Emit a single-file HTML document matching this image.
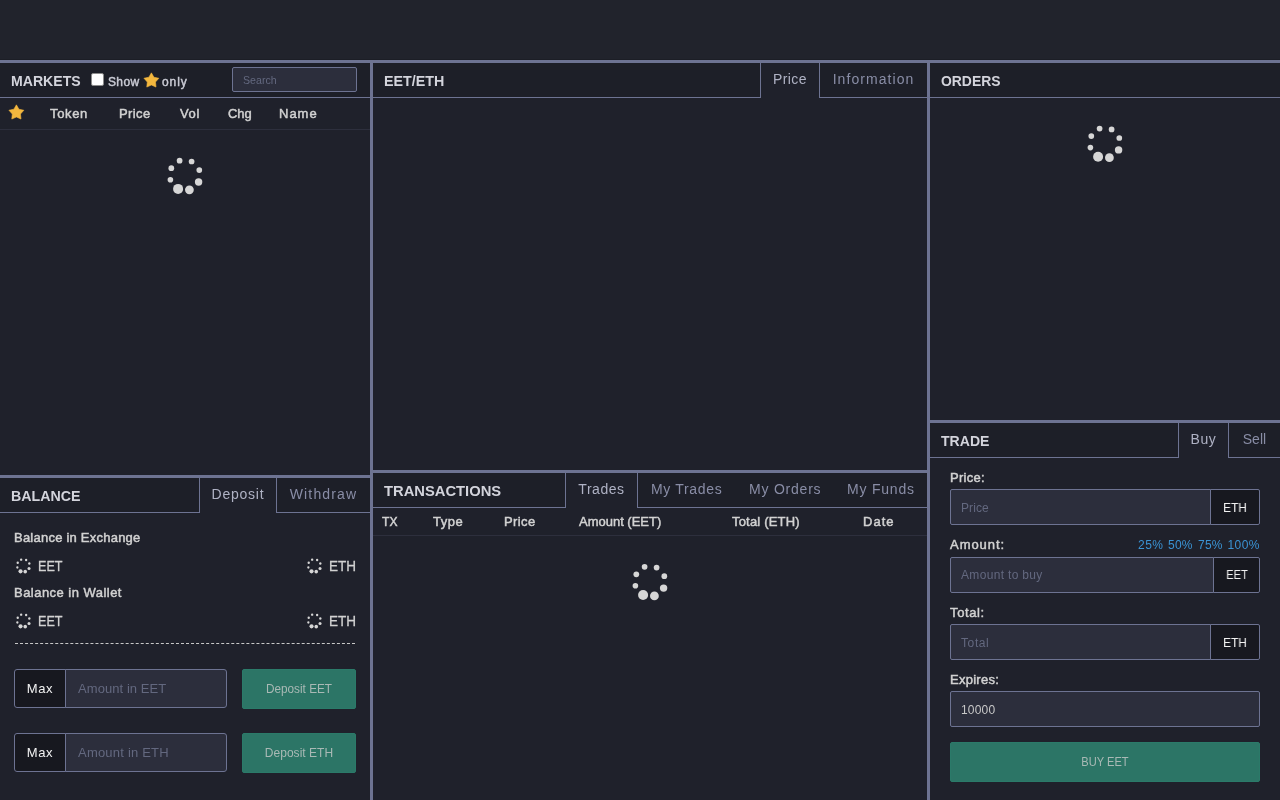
<!DOCTYPE html>
<html lang="en">
<head>
<meta charset="utf-8">
<title>EET/ETH</title>
<style>
*{box-sizing:border-box;margin:0;padding:0}
html,body{width:1280px;height:800px;overflow:hidden;background:#1f212b}
body{position:relative;font-family:"Liberation Sans","DejaVu Sans",sans-serif;font-size:13px;color:#d2d2d2}
.a,.t{position:absolute}
.t{white-space:nowrap;line-height:1;display:block;font-weight:normal;font-size:13px}
.tx{position:absolute;left:0;top:0;width:1280px;height:800px;will-change:transform}
.nav{left:0;top:0;width:1280px;height:60px;background:#21232c;border-bottom:1px solid #1c1e26}
.hd{background:#1d1f28;height:34px}
</style>
</head>
<body>
<div class="a nav"></div>
<!-- frame -->
<div class="a" style="left:0px;top:60px;width:1280px;height:3px;background:#6d7392"></div>
<div class="a" style="left:370px;top:60px;width:3px;height:740px;background:#6d7392"></div>
<div class="a" style="left:927px;top:60px;width:3px;height:740px;background:#6d7392"></div>
<div class="a" style="left:0px;top:475px;width:370px;height:3px;background:#6d7392"></div>
<div class="a" style="left:373px;top:470px;width:554px;height:3px;background:#6d7392"></div>
<div class="a" style="left:930px;top:420px;width:350px;height:3px;background:#6d7392"></div>
<!-- markets -->
<div class="a hd" style="left:0;top:63px;width:370px"></div>
<div class="a" style="left:0px;top:97px;width:370px;height:1px;background:#6d7392"></div>
<div class="a" style="left:91px;top:73px;width:13px;height:13px;background:#fff;border:1px solid #8a8a8a;border-radius:2px"></div>
<svg class="a" style="left:141px;top:70px" width="20" height="20" viewBox="0 0 20 20"><polygon points="10.40,2.85 12.93,7.22 17.87,8.27 14.49,12.03 15.01,17.05 10.40,15.00 5.79,17.05 6.31,12.03 2.93,8.27 7.87,7.22" fill="#f3b73e" stroke="#f3b73e" stroke-width="0.6" stroke-linejoin="round"/></svg>
<div class="a" style="left:232px;top:67px;width:125px;height:25px;background:#2c2e3c;border:1px solid #6d7392;border-radius:2px"></div>
<svg class="a" style="left:6px;top:102px" width="20" height="20" viewBox="0 0 20 20"><polygon points="10.40,2.85 12.93,7.22 17.87,8.27 14.49,12.03 15.01,17.05 10.40,15.00 5.79,17.05 6.31,12.03 2.93,8.27 7.87,7.22" fill="#f3b73e" stroke="#f3b73e" stroke-width="0.6" stroke-linejoin="round"/></svg>
<div class="a" style="left:0px;top:129px;width:370px;height:1px;background:#2d2f3d"></div>
<svg class="a" style="left:163px;top:153px" width="44" height="44" viewBox="0 0 44 44" fill="#d6d6d6"><circle cx="16.60" cy="7.70" r="2.85"/><circle cx="28.60" cy="8.50" r="2.85"/><circle cx="36.30" cy="17.10" r="2.85"/><circle cx="35.60" cy="29.00" r="3.70"/><circle cx="26.40" cy="36.80" r="4.40"/><circle cx="15.10" cy="35.90" r="5.00"/><circle cx="7.40" cy="26.70" r="2.80"/><circle cx="8.30" cy="15.20" r="2.85"/></svg>
<!-- balance -->
<div class="a hd" style="left:0;top:478px;width:370px"></div>
<div class="a" style="left:0px;top:512px;width:199px;height:1px;background:#6d7392"></div>
<div class="a" style="left:199px;top:478px;width:77px;height:35px;background:#1f212b;border-left:1px solid #6d7392"></div>
<div class="a" style="left:276px;top:478px;width:94px;height:35px;border-left:1px solid #6d7392;border-bottom:1px solid #6d7392"></div>
<svg class="a" style="left:13px;top:555px" width="20" height="20" viewBox="0 0 20 20" fill="#d6d6d6"><circle cx="8.16" cy="4.64" r="1.18"/><circle cx="13.13" cy="4.97" r="1.18"/><circle cx="16.32" cy="8.53" r="1.18"/><circle cx="16.03" cy="13.46" r="1.53"/><circle cx="12.22" cy="16.69" r="1.82"/><circle cx="7.54" cy="16.31" r="2.07"/><circle cx="4.36" cy="12.50" r="1.16"/><circle cx="4.73" cy="7.74" r="1.18"/></svg>
<svg class="a" style="left:304px;top:555px" width="20" height="20" viewBox="0 0 20 20" fill="#d6d6d6"><circle cx="8.16" cy="4.64" r="1.18"/><circle cx="13.13" cy="4.97" r="1.18"/><circle cx="16.32" cy="8.53" r="1.18"/><circle cx="16.03" cy="13.46" r="1.53"/><circle cx="12.22" cy="16.69" r="1.82"/><circle cx="7.54" cy="16.31" r="2.07"/><circle cx="4.36" cy="12.50" r="1.16"/><circle cx="4.73" cy="7.74" r="1.18"/></svg>
<svg class="a" style="left:13px;top:610px" width="20" height="20" viewBox="0 0 20 20" fill="#d6d6d6"><circle cx="8.16" cy="4.64" r="1.18"/><circle cx="13.13" cy="4.97" r="1.18"/><circle cx="16.32" cy="8.53" r="1.18"/><circle cx="16.03" cy="13.46" r="1.53"/><circle cx="12.22" cy="16.69" r="1.82"/><circle cx="7.54" cy="16.31" r="2.07"/><circle cx="4.36" cy="12.50" r="1.16"/><circle cx="4.73" cy="7.74" r="1.18"/></svg>
<svg class="a" style="left:304px;top:610px" width="20" height="20" viewBox="0 0 20 20" fill="#d6d6d6"><circle cx="8.16" cy="4.64" r="1.18"/><circle cx="13.13" cy="4.97" r="1.18"/><circle cx="16.32" cy="8.53" r="1.18"/><circle cx="16.03" cy="13.46" r="1.53"/><circle cx="12.22" cy="16.69" r="1.82"/><circle cx="7.54" cy="16.31" r="2.07"/><circle cx="4.36" cy="12.50" r="1.16"/><circle cx="4.73" cy="7.74" r="1.18"/></svg>
<div class="a" style="left:15px;top:643px;width:340px;height:0px;border-top:1px dashed #c8c8c8"></div>
<div class="a" style="left:14px;top:669px;width:52px;height:39px;background:#17181f;border:1px solid #6d7392;border-radius:3px 0 0 3px"></div>
<div class="a" style="left:65px;top:669px;width:162px;height:39px;background:#2c2e3c;border:1px solid #6d7392;border-radius:0 3px 3px 0"></div>
<div class="a" style="left:242px;top:669px;width:114px;height:40px;background:#2c7566;border:1px solid #2b7a69;border-radius:2px"></div>
<div class="a" style="left:14px;top:733px;width:52px;height:39px;background:#17181f;border:1px solid #6d7392;border-radius:3px 0 0 3px"></div>
<div class="a" style="left:65px;top:733px;width:162px;height:39px;background:#2c2e3c;border:1px solid #6d7392;border-radius:0 3px 3px 0"></div>
<div class="a" style="left:242px;top:733px;width:114px;height:40px;background:#2c7566;border:1px solid #2b7a69;border-radius:2px"></div>
<!-- chart -->
<div class="a hd" style="left:373px;top:63px;width:554px"></div>
<div class="a" style="left:373px;top:97px;width:387px;height:1px;background:#6d7392"></div>
<div class="a" style="left:760px;top:63px;width:59px;height:35px;background:#1f212b;border-left:1px solid #6d7392"></div>
<div class="a" style="left:819px;top:63px;width:108px;height:35px;border-left:1px solid #6d7392;border-bottom:1px solid #6d7392"></div>
<!-- transactions -->
<div class="a hd" style="left:373px;top:473px;width:554px"></div>
<div class="a" style="left:373px;top:507px;width:192px;height:1px;background:#6d7392"></div>
<div class="a" style="left:565px;top:473px;width:72px;height:35px;background:#1f212b;border-left:1px solid #6d7392"></div>
<div class="a" style="left:637px;top:473px;width:290px;height:35px;border-left:1px solid #6d7392;border-bottom:1px solid #6d7392"></div>
<div class="a" style="left:373px;top:535px;width:554px;height:1px;background:#2d2f3d"></div>
<svg class="a" style="left:628px;top:559px" width="44" height="44" viewBox="0 0 44 44" fill="#d6d6d6"><circle cx="16.60" cy="7.80" r="2.85"/><circle cx="28.60" cy="8.60" r="2.85"/><circle cx="36.30" cy="17.20" r="2.85"/><circle cx="35.60" cy="29.10" r="3.70"/><circle cx="26.40" cy="36.90" r="4.40"/><circle cx="15.10" cy="36.00" r="5.00"/><circle cx="7.40" cy="26.80" r="2.80"/><circle cx="8.30" cy="15.30" r="2.85"/></svg>
<!-- orders -->
<div class="a hd" style="left:930px;top:63px;width:350px"></div>
<div class="a" style="left:930px;top:97px;width:350px;height:1px;background:#6d7392"></div>
<svg class="a" style="left:1083px;top:121px" width="44" height="44" viewBox="0 0 44 44" fill="#d6d6d6"><circle cx="16.60" cy="7.60" r="2.85"/><circle cx="28.60" cy="8.40" r="2.85"/><circle cx="36.30" cy="17.00" r="2.85"/><circle cx="35.60" cy="28.90" r="3.70"/><circle cx="26.40" cy="36.70" r="4.40"/><circle cx="15.10" cy="35.80" r="5.00"/><circle cx="7.40" cy="26.60" r="2.80"/><circle cx="8.30" cy="15.10" r="2.85"/></svg>
<!-- trade -->
<div class="a hd" style="left:930px;top:423px;width:350px"></div>
<div class="a" style="left:930px;top:457px;width:248px;height:1px;background:#6d7392"></div>
<div class="a" style="left:1178px;top:423px;width:50px;height:35px;background:#1f212b;border-left:1px solid #6d7392"></div>
<div class="a" style="left:1228px;top:423px;width:52px;height:35px;border-left:1px solid #6d7392;border-bottom:1px solid #6d7392"></div>
<div class="a" style="left:950px;top:489px;width:261px;height:36px;background:#2c2e3c;border:1px solid #6d7392;border-radius:2px 0 0 2px"></div>
<div class="a" style="left:1210px;top:489px;width:50px;height:36px;background:#17181f;border:1px solid #6d7392;border-radius:0 2px 2px 0"></div>
<div class="a" style="left:950px;top:557px;width:264px;height:36px;background:#2c2e3c;border:1px solid #6d7392;border-radius:2px 0 0 2px"></div>
<div class="a" style="left:1213px;top:557px;width:47px;height:36px;background:#17181f;border:1px solid #6d7392;border-radius:0 2px 2px 0"></div>
<div class="a" style="left:950px;top:624px;width:261px;height:36px;background:#2c2e3c;border:1px solid #6d7392;border-radius:2px 0 0 2px"></div>
<div class="a" style="left:1210px;top:624px;width:50px;height:36px;background:#17181f;border:1px solid #6d7392;border-radius:0 2px 2px 0"></div>
<div class="a" style="left:950px;top:691px;width:310px;height:36px;background:#2c2e3c;border:1px solid #6d7392;border-radius:2px"></div>
<div class="a" style="left:950px;top:742px;width:310px;height:40px;background:#2c7566;border:1px solid #2b7a69;border-radius:2px"></div>
<!-- text -->
<div class="tx">
<h2 class="t" style="top:73px;left:11px;font-size:15.5px;font-weight:bold;transform:scaleX(0.9097);transform-origin:0 50%;color:#d3d4dc">MARKETS</h2>
<div class="t" style="top:76px;left:108px;font-size:12px;-webkit-text-stroke:0.43px;letter-spacing:0.36px;color:#cbccd6">Show</div>
<div class="t" style="top:76px;left:162px;font-size:12px;-webkit-text-stroke:0.43px;letter-spacing:0.91px;color:#cbccd6">only</div>
<div class="t" style="top:75px;left:243px;font-size:11px;transform:scaleX(0.9652);transform-origin:0 50%;color:#63687f">Search</div>
<div class="t" style="top:107px;left:50px;-webkit-text-stroke:0.47px;letter-spacing:0.65px">Token</div>
<div class="t" style="top:107px;left:119px;-webkit-text-stroke:0.47px;letter-spacing:0.38px">Price</div>
<div class="t" style="top:107px;left:180px;-webkit-text-stroke:0.47px;letter-spacing:0.66px">Vol</div>
<div class="t" style="top:107px;left:228px;-webkit-text-stroke:0.47px;transform:scaleX(0.9948);transform-origin:0 50%">Chg</div>
<div class="t" style="top:107px;left:279px;-webkit-text-stroke:0.47px;letter-spacing:0.99px">Name</div>
<h2 class="t" style="top:488px;left:11px;font-size:15.5px;font-weight:bold;transform:scaleX(0.9159);transform-origin:0 50%;color:#d3d4dc">BALANCE</h2>
<a class="t" style="top:487px;left:38px;width:400px;text-align:center;font-size:14px;letter-spacing:0.76px;color:#afb2c4">Deposit</a>
<a class="t" style="top:487px;left:123.5px;width:400px;text-align:center;font-size:14px;letter-spacing:1.15px;color:#898da6">Withdraw</a>
<div class="t" style="top:531px;left:14px;-webkit-text-stroke:0.47px;letter-spacing:0.23px">Balance in Exchange</div>
<div class="t" style="top:558px;left:38px;font-size:15.5px;-webkit-text-stroke:0.30px;transform:scaleX(0.8155);transform-origin:0 50%">EET</div>
<div class="t" style="top:558px;right:924px;font-size:15.5px;-webkit-text-stroke:0.30px;transform:scaleX(0.8710);transform-origin:100% 50%">ETH</div>
<div class="t" style="top:586px;left:14px;-webkit-text-stroke:0.47px;letter-spacing:0.47px">Balance in Wallet</div>
<div class="t" style="top:613px;left:38px;font-size:15.5px;-webkit-text-stroke:0.30px;transform:scaleX(0.8155);transform-origin:0 50%">EET</div>
<div class="t" style="top:613px;right:924px;font-size:15.5px;-webkit-text-stroke:0.30px;transform:scaleX(0.8710);transform-origin:100% 50%">ETH</div>
<div class="t" style="top:682px;left:-160px;width:400px;text-align:center;letter-spacing:0.59px;color:#f2f2f2">Max</div>
<div class="t" style="top:682px;left:78px;letter-spacing:0.07px;color:#63687f">Amount in EET</div>
<div class="t" style="top:683px;left:99px;width:400px;text-align:center;font-size:12px;transform:scaleX(0.9812);transform-origin:50% 50%;color:#a9b9b5">Deposit EET</div>
<div class="t" style="top:746px;left:-160px;width:400px;text-align:center;letter-spacing:0.59px;color:#f2f2f2">Max</div>
<div class="t" style="top:746px;left:78px;letter-spacing:0.21px;color:#63687f">Amount in ETH</div>
<div class="t" style="top:747px;left:99px;width:400px;text-align:center;font-size:12px;letter-spacing:0.03px;color:#a9b9b5">Deposit ETH</div>
<h2 class="t" style="top:73px;left:384px;font-size:15.5px;font-weight:bold;transform:scaleX(0.9205);transform-origin:0 50%;color:#d3d4dc">EET/ETH</h2>
<a class="t" style="top:72px;left:590px;width:400px;text-align:center;font-size:14px;letter-spacing:0.39px;color:#afb2c4">Price</a>
<a class="t" style="top:72px;left:673.5px;width:400px;text-align:center;font-size:14px;letter-spacing:1.06px;color:#898da6">Information</a>
<h2 class="t" style="top:483px;left:384px;font-size:15.5px;font-weight:bold;transform:scaleX(0.9510);transform-origin:0 50%;color:#d3d4dc">TRANSACTIONS</h2>
<a class="t" style="top:482px;left:401.5px;width:400px;text-align:center;font-size:14px;letter-spacing:0.55px;color:#afb2c4">Trades</a>
<a class="t" style="top:482px;left:651px;font-size:14px;letter-spacing:0.66px;color:#898da6">My Trades</a>
<a class="t" style="top:482px;left:749px;font-size:14px;letter-spacing:0.78px;color:#898da6">My Orders</a>
<a class="t" style="top:482px;left:847px;font-size:14px;letter-spacing:0.79px;color:#898da6">My Funds</a>
<div class="t" style="top:515px;left:382px;-webkit-text-stroke:0.47px;transform:scaleX(0.9295);transform-origin:0 50%">TX</div>
<div class="t" style="top:515px;left:433px;-webkit-text-stroke:0.47px;letter-spacing:0.49px">Type</div>
<div class="t" style="top:515px;left:504px;-webkit-text-stroke:0.47px;letter-spacing:0.38px">Price</div>
<div class="t" style="top:515px;left:579px;-webkit-text-stroke:0.47px;transform:scaleX(0.9990);transform-origin:0 50%">Amount (EET)</div>
<div class="t" style="top:515px;left:732px;-webkit-text-stroke:0.47px;letter-spacing:0.18px">Total (ETH)</div>
<div class="t" style="top:515px;left:863px;-webkit-text-stroke:0.47px;letter-spacing:1.04px">Date</div>
<h2 class="t" style="top:73px;left:941px;font-size:15.5px;font-weight:bold;transform:scaleX(0.8973);transform-origin:0 50%;color:#d3d4dc">ORDERS</h2>
<h2 class="t" style="top:433px;left:941px;font-size:15.5px;font-weight:bold;transform:scaleX(0.9075);transform-origin:0 50%;color:#d3d4dc">TRADE</h2>
<a class="t" style="top:432px;left:1003.5px;width:400px;text-align:center;font-size:14px;letter-spacing:0.56px;color:#afb2c4">Buy</a>
<a class="t" style="top:432px;left:1054.5px;width:400px;text-align:center;font-size:14px;letter-spacing:0.05px;color:#898da6">Sell</a>
<label class="t" style="top:471px;left:950px;-webkit-text-stroke:0.47px;letter-spacing:0.30px">Price:</label>
<div class="t" style="top:502px;left:961px;font-size:12px;letter-spacing:0.07px;color:#63687f">Price</div>
<div class="t" style="top:501px;left:1035px;width:400px;text-align:center;transform:scaleX(0.9219);transform-origin:50% 50%;color:#f2f2f2">ETH</div>
<label class="t" style="top:538px;left:950px;-webkit-text-stroke:0.47px;letter-spacing:0.96px">Amount:</label>
<a class="t" style="top:539px;left:1138px;font-size:12px;letter-spacing:0.51px;color:#3a93d4">25%</a>
<a class="t" style="top:539px;left:1168px;font-size:12px;letter-spacing:0.21px;color:#3a93d4">50%</a>
<a class="t" style="top:539px;left:1198px;font-size:12px;letter-spacing:0.21px;color:#3a93d4">75%</a>
<a class="t" style="top:539px;right:20px;font-size:12px;letter-spacing:0.47px;color:#3a93d4">100%</a>
<div class="t" style="top:569px;left:961px;font-size:12px;letter-spacing:0.33px;color:#63687f">Amount to buy</div>
<div class="t" style="top:568px;left:1036.5px;width:400px;text-align:center;transform:scaleX(0.8542);transform-origin:50% 50%;color:#f2f2f2">EET</div>
<label class="t" style="top:606px;left:950px;-webkit-text-stroke:0.47px;letter-spacing:0.63px">Total:</label>
<div class="t" style="top:637px;left:961px;font-size:12px;letter-spacing:0.61px;color:#63687f">Total</div>
<div class="t" style="top:636px;left:1035px;width:400px;text-align:center;transform:scaleX(0.9219);transform-origin:50% 50%;color:#f2f2f2">ETH</div>
<label class="t" style="top:673px;left:950px;-webkit-text-stroke:0.47px;letter-spacing:0.27px">Expires:</label>
<div class="t" style="top:704px;left:961px;font-size:12px;letter-spacing:0.20px;color:#c8c8c8">10000</div>
<div class="t" style="top:756px;left:905px;width:400px;text-align:center;font-size:12px;transform:scaleX(0.9246);transform-origin:50% 50%;color:#a9b9b5">BUY EET</div>
</div>
</body>
</html>
